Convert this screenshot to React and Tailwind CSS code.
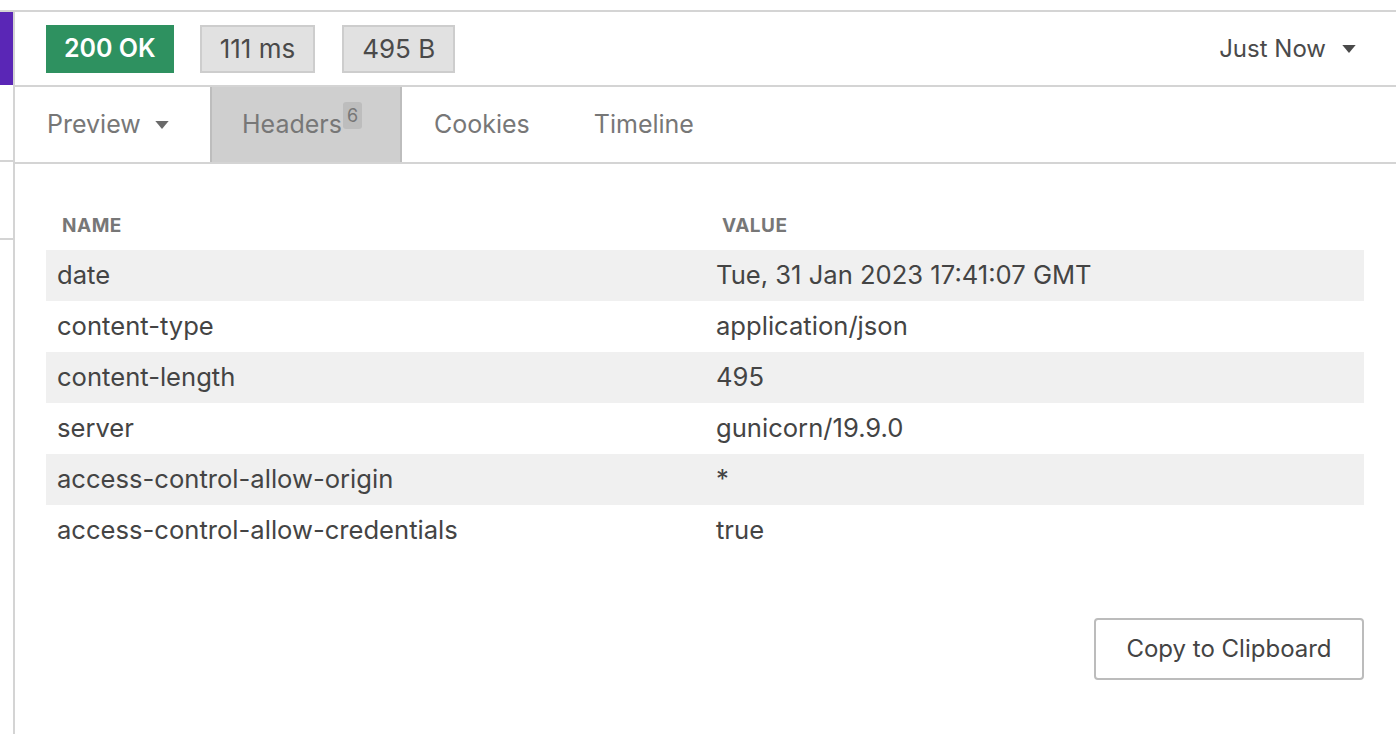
const headers = [
  ['date', 'Tue, 31 Jan 2023 17:41:07 GMT'],
  ['content-type', 'application/json'],
  ['content-length', '495'],
  ['server', 'gunicorn/19.9.0'],
  ['access-control-allow-origin', '*'],
  ['access-control-allow-credentials', 'true'],
];

function Caret({ className }) {
  return (
    <svg viewBox="0 0 10 6" className={className} fill="currentColor">
      <path d="M0 0h10L5 6z" />
    </svg>
  );
}

export default function App() {
  return (
    <div
      className="h-[734px] w-[1396px] overflow-hidden bg-white text-[#444]"
      style={{ fontFamily: 'Inter, "Noto Sans", sans-serif' }}
    >
      <div className="mt-[10px] flex h-[724px] border-t-2 border-[#d4d4d4]">
        {/* Left strip */}
        <div className="flex w-[13px] flex-col">
          <div className="h-[73px] bg-[#5a26b6]" />
          <div className="h-[77px] border-b-2 border-[#d4d4d4]" />
          <div className="h-[78px] border-b-2 border-[#d4d4d4]" />
        </div>

        <div className="flex flex-1 flex-col border-l-2 border-[#d4d4d4]">
          {/* Status row */}
          <div className="flex h-[75px] items-center border-b-2 border-[#d4d4d4] pl-[31px] pr-[40px]">
            <div className="flex h-[48px] items-center bg-[#2e9160] px-[18px] text-[25px] font-semibold text-white">
              200 OK
            </div>
            <div className="ml-[26px] flex h-[48px] items-center border-2 border-[#cdcdcd] bg-[#e1e1e1] px-[18px] text-[26px] text-[#4a4a4a]">
              111 ms
            </div>
            <div className="ml-[27px] flex h-[48px] items-center border-2 border-[#cdcdcd] bg-[#e1e1e1] px-[18px] text-[26px] text-[#4a4a4a]">
              495 B
            </div>
            <div className="ml-auto flex items-center gap-[16px] text-[24px] text-[#4a4a4a]">
              Just Now
              <Caret className="h-[8px] w-[14px] text-[#4a4a4a]" />
            </div>
          </div>

          {/* Tabs */}
          <div className="flex h-[77px] border-b-2 border-[#d4d4d4] text-[25px] text-[#777]">
            <div className="flex w-[195px] items-center pl-[32px]">
              Preview
              <Caret className="ml-[13px] h-[8px] w-[16px] text-[#6a6a6a]" />
            </div>
            <div className="flex w-[192px] items-center border-x-2 border-[#bdbdbd] bg-[#cfcfcf] pl-[30px]">
              <span>Headers</span>
              <span className="mb-[18px] ml-[1px] rounded-[3px] bg-[#bdbdbd] px-[4px] text-[18px] leading-[27px] text-[#777]">
                6
              </span>
            </div>
            <div className="flex items-center px-[32px]">Cookies</div>
            <div className="flex items-center px-[32px]">Timeline</div>
          </div>

          {/* Table */}
          <div className="flex flex-1 flex-col pl-[31px] pr-[32px] pt-[48px]">
            <div className="grid grid-cols-2 pb-[9px] text-[19px] font-bold tracking-[0.5px] text-[#777]">
              <div className="pl-[16px]">NAME</div>
              <div className="pl-[17px]">VALUE</div>
            </div>
            {headers.map(([name, value], i) => (
              <div
                key={name}
                className={`grid h-[51px] grid-cols-2 items-center text-[25.6px] text-[#444] ${
                  i % 2 === 0 ? 'bg-[#f0f0f0]' : ''
                }`}
              >
                <div className="pl-[11px]">{name}</div>
                <div className="pl-[11px]">{value}</div>
              </div>
            ))}
            <div className="mt-[62px] flex justify-end">
              <button className="h-[62px] w-[270px] rounded-[4px] border-2 border-[#bcbcbc] bg-white text-[24px] text-[#444]">
                Copy to Clipboard
              </button>
            </div>
          </div>
        </div>
      </div>
    </div>
  );
}
